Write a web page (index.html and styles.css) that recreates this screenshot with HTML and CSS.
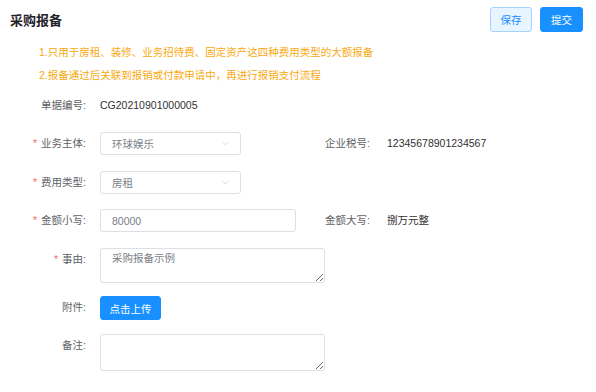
FILE: index.html
```html
<!DOCTYPE html>
<html lang="zh-CN">
<head>
  <meta charset="UTF-8">
  <title>采购报备</title>
  <link rel="stylesheet" href="styles.css">
</head>
<body>
  <div class="page">
    <div class="header">
      <h1 class="title">采购报备</h1>
      <div class="actions">
        <button class="btn btn-plain">保存</button>
        <button class="btn btn-primary">提交</button>
      </div>
    </div>

    <div class="notes">
      <p>1.只用于房租、装修、业务招待费、固定资产这四种费用类型的大额报备</p>
      <p>2.报备通过后关联到报销或付款申请中，再进行报销支付流程</p>
    </div>

    <form class="form">
      <div class="form-row">
        <div class="form-item">
          <label class="label">单据编号:</label>
          <div class="value">CG20210901000005</div>
        </div>
      </div>

      <div class="form-row">
        <div class="form-item">
          <label class="label required">业务主体:</label>
          <div class="select">
            <span>环球娱乐</span>
            <svg class="arrow" viewBox="0 0 10 6"><path d="M1 1l4 4 4-4" /></svg>
          </div>
        </div>
        <div class="form-item side">
          <label class="label">企业税号:</label>
          <div class="value">12345678901234567</div>
        </div>
      </div>

      <div class="form-row">
        <div class="form-item">
          <label class="label required">费用类型:</label>
          <div class="select">
            <span>房租</span>
            <svg class="arrow" viewBox="0 0 10 6"><path d="M1 1l4 4 4-4" /></svg>
          </div>
        </div>
      </div>

      <div class="form-row">
        <div class="form-item">
          <label class="label required">金额小写:</label>
          <input class="input" type="text" value="80000">
        </div>
        <div class="form-item side">
          <label class="label">金额大写:</label>
          <div class="value">捌万元整</div>
        </div>
      </div>

      <div class="form-row row-tight">
        <div class="form-item">
          <label class="label required">事由:</label>
          <textarea class="textarea">采购报备示例</textarea>
        </div>
      </div>

      <div class="form-row row-tight">
        <div class="form-item">
          <label class="label">附件:</label>
          <button type="button" class="btn btn-primary btn-upload">点击上传</button>
        </div>
      </div>

      <div class="form-row">
        <div class="form-item">
          <label class="label">备注:</label>
          <textarea class="textarea tall"></textarea>
        </div>
      </div>
    </form>
  </div>
</body>
</html>
```

FILE: styles.css
```css
:root {
  --primary: #1890ff; --text: #303133; --regular: #606266;
  --border: #dcdfe6; --warning: #f8a90f;
}

* { margin: 0; padding: 0; box-sizing: border-box; }

body {
  font-family: "Liberation Sans", "Noto Sans CJK SC", sans-serif;
  font-size: 10.5px; color: var(--text); background: #fff;
}

.page { padding: 7px 13px 0 10px; }

.header { display: flex; justify-content: space-between; align-items: center; height: 25px; }
.title { font-size: 13px; font-weight: 700; color: #1f2329; }
.actions { display: flex; gap: 8px; }

.btn {
  height: 25px; padding: 0; border-radius: 3px; font-size: 10.5px; white-space: nowrap;
  font-family: inherit; cursor: pointer; border: 1px solid var(--primary);
}
.btn-plain { background: #e8f4ff; border-color: #a3d3ff; color: var(--primary); width: 42px; }
.btn-primary { background: var(--primary); color: #fff; width: 43px; }

.notes { margin-top: 8.5px; padding-left: 29px; color: var(--warning); line-height: 23px; }

.form { margin-top: 7px; }
.form-row { display: flex; margin-bottom: 15.5px; }
.form-row.row-tight { margin-bottom: 13.5px; }
.form-item { display: flex; align-items: flex-start; width: 315px; }
.form-item.side { width: auto; }

.label {
  width: 90px; padding-right: 14px; text-align: right; line-height: 23px;
  color: var(--regular); flex-shrink: 0;
}
.side .label { width: 62px; padding-right: 0; text-align: left; }
.required::before { content: "*"; color: #f56c6c; margin-right: 4px; }

.value { line-height: 23px; color: var(--text); }

.select, .input, .textarea {
  border: 1px solid var(--border); border-radius: 3px; background: #fff;
  font-family: inherit; font-size: 10.5px; color: #7a7e87;
}
.select {
  width: 141px; height: 23px; padding: 0 11px; display: flex;
  align-items: center; justify-content: space-between;
}
.arrow { width: 7px; height: 5px; fill: none; stroke: #c0c4cc; stroke-width: 1; }

.input { width: 196px; height: 23px; padding: 0 11px; outline: none; }

.textarea {
  width: 225px; height: 35px; padding: 2px 11px; line-height: 1.5;
  outline: none; resize: vertical; display: block;
}
.textarea.tall { height: 37px; }

.btn-upload { width: 61px; height: 24px; }
```
